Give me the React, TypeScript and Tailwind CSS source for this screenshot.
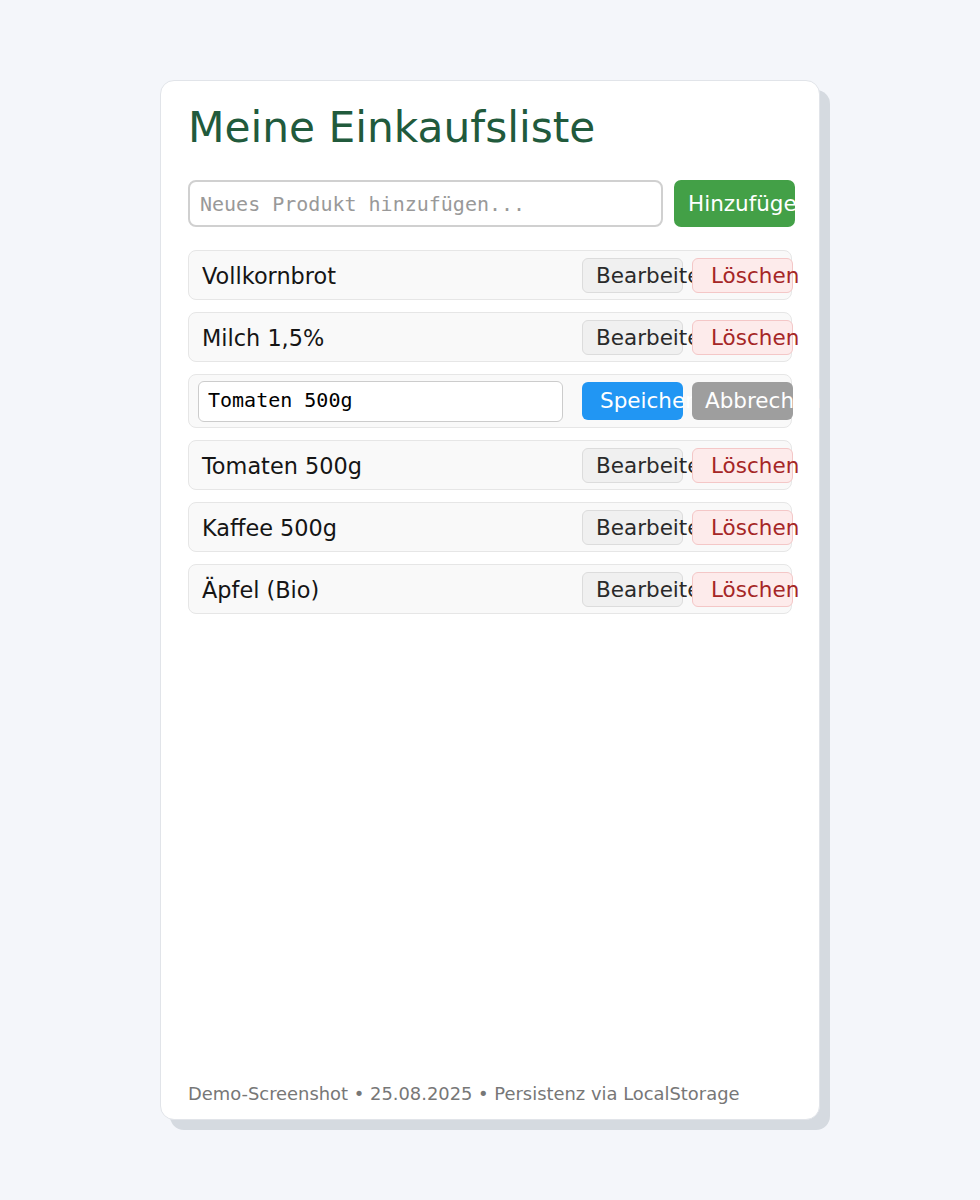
import { useState } from 'react';

const SANS = "font-['DejaVu_Sans','Liberation_Sans',sans-serif]";
const MONO = "font-['DejaVu_Sans_Mono','Liberation_Mono',monospace]";

const initialItems = [
  'Vollkornbrot',
  'Milch 1,5%',
  'Tomaten 500g',
  'Tomaten 500g',
  'Kaffee 500g',
  'Äpfel (Bio)'
];

const ShoppingList: React.FC = () => {
  const [items] = useState<string[]>(initialItems);
  const [editIndex] = useState<number>(2);
  const [draft, setDraft] = useState('Tomaten 500g');
  const [newItem, setNewItem] = useState('');

  return (
    <div className={`min-h-[1200px] bg-[#f4f6fa] pt-[80px] ${SANS}`}>
      <div className="mx-auto flex h-[1040px] w-[660px] flex-col rounded-[14px] border border-[#e1e4e9] bg-white px-[27px] pt-[22px] pb-[15px] shadow-[10px_10px_0_#d5dae0]">
        <h1 className="mb-[27px] text-[42.3px] leading-[50px] text-[#215a3c]">
          Meine Einkaufsliste
        </h1>

        <div className="flex gap-[11px]">
          <input
            className={`h-[47px] w-[475px] shrink-0 rounded-[8px] border-2 border-[#d0d0d0] bg-white px-[10px] text-[20px] text-[#111] outline-none placeholder:text-[#999] ${MONO}`}
            placeholder="Neues Produkt hinzufügen..."
            value={newItem}
            onChange={(e) => setNewItem(e.target.value)}
          />
          <button className="flex h-[47px] w-[121px] shrink-0 items-center overflow-visible whitespace-nowrap rounded-[7px] bg-[#43a047] pt-[1px] pl-[14px] text-[21.5px] text-white">
            Hinzufügen
          </button>
        </div>

        <ul className="mt-[23px] flex flex-col gap-[12px]">
          {items.map((item, i) =>
            i === editIndex ? (
              <li
                key={i}
                className="flex h-[54px] items-center rounded-[8px] border border-[#e6e6e6] bg-[#f9f9f9] pl-[9px]"
              >
                <input
                  className={`h-[41px] w-[365px] shrink-0 rounded-[6px] border border-[#cccccc] bg-white pb-[3px] pl-[9px] text-[20px] text-black outline-none ${MONO}`}
                  value={draft}
                  onChange={(e) => setDraft(e.target.value)}
                />
                <button className="ml-[19px] flex h-[38px] w-[101px] shrink-0 items-center overflow-visible whitespace-nowrap rounded-[6px] bg-[#2196f3] pt-[1px] pl-[18px] text-[21.5px] text-white">
                  Speichern
                </button>
                <button className="ml-[9px] flex h-[38px] w-[101px] shrink-0 items-center overflow-visible whitespace-nowrap rounded-[6px] bg-[#9e9e9e] pt-[1px] pl-[13px] text-[21.5px] text-white">
                  Abbrechen
                </button>
              </li>
            ) : (
              <li
                key={i}
                className="flex h-[50px] items-center rounded-[8px] border border-[#e6e6e6] bg-[#f9f9f9] pl-[13px]"
              >
                <span className="flex-1 pt-[3px] text-[22.4px] text-[#151515]">{item}</span>
                <button className="flex h-[35px] w-[101px] shrink-0 items-center overflow-visible whitespace-nowrap rounded-[6px] border border-[#dcdcdc] bg-[#f0f0f0] pt-[2px] pl-[13px] text-[21.5px] text-[#2a2a2a]">
                  Bearbeiten
                </button>
                <button className="-mr-[2px] ml-[9px] flex h-[35px] w-[101px] shrink-0 items-center overflow-visible whitespace-nowrap rounded-[6px] border border-[#f4c7c7] bg-[#fdebeb] pt-[2px] pl-[18px] text-[21.5px] text-[#a52626]">
                  Löschen
                </button>
              </li>
            )
          )}
        </ul>

        <p className="mt-auto text-[17.9px] leading-[20px] text-[#777]">
          Demo-Screenshot • 25.08.2025 • Persistenz via LocalStorage
        </p>
      </div>
    </div>
  );
};

export default ShoppingList;
